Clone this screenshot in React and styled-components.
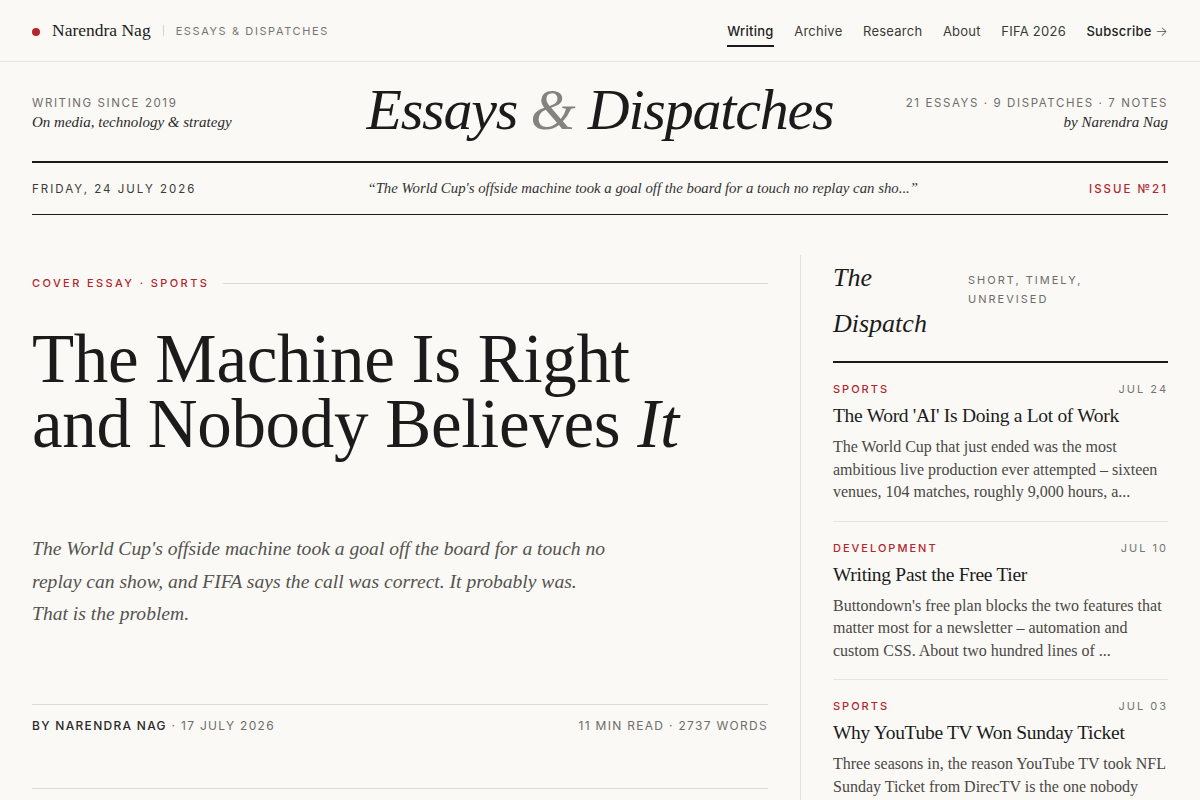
import styled, { createGlobalStyle } from "styled-components";

const GlobalStyle = createGlobalStyle`
  html, body {
    margin: 0;
    padding: 0;
    background: #faf9f6;
  }
  body {
    font-family: Inter, "Noto Sans", sans-serif;
    color: #1b1b1b;
    -webkit-font-smoothing: antialiased;
  }
  * { box-sizing: border-box; }
`;

const serif = `"Liberation Serif", "DejaVu Serif", serif`;
const red = "#b3262d";

const TopBar = styled.header`
  height: 62px;
  padding: 0 32px;
  display: flex;
  align-items: center;
  justify-content: space-between;
  border-bottom: 1px solid #e7e5e0;
`;

const Brand = styled.div`
  display: flex;
  align-items: center;
`;

const Dot = styled.span`
  width: 8px;
  height: 8px;
  border-radius: 50%;
  background: ${red};
  margin: 2px 12px 0 0;
`;

const BrandName = styled.span`
  font-family: ${serif};
  font-size: 17.5px;
  color: #1b1b1b;
`;

const BrandSep = styled.span`
  width: 1px;
  height: 11px;
  background: #d6d4ce;
  margin: 0 12px;
`;

const Kicker = styled.span`
  font-size: 11px;
  letter-spacing: ${(p) => p.$spacing || 1.6}px;
  text-transform: uppercase;
  color: ${(p) => p.$color || "#77756f"};
  font-weight: ${(p) => p.$weight || 400};
`;

const Nav = styled.nav`
  display: flex;
  align-items: center;
  gap: 20.5px;
`;

const NavLink = styled.a`
  font-size: 13px;
  line-height: 16px;
  padding: 8px 0 6px;
  color: ${(p) => (p.$strong ? "#222" : "#3b3a37")};
  font-weight: ${(p) => (p.$strong ? 500 : 400)};
  border-bottom: 2px solid ${(p) => (p.$active ? "#1b1b1b" : "transparent")};
  text-decoration: none;
  letter-spacing: 0.25px;
`;

const Arrow = styled.span`
  font-weight: 300;
  color: #555;
  line-height: 16px;
`;

const Wrap = styled.div`
  padding: 0 32px;
`;

const Masthead = styled.div`
  height: 101px;
  display: grid;
  grid-template-columns: 1fr auto 1fr;
  align-items: center;
  border-bottom: 2px solid #1b1b1b;
`;

const MastSide = styled.div`
  display: flex;
  flex-direction: column;
  gap: 4px;
  align-items: ${(p) => (p.$right ? "flex-end" : "flex-start")};
  padding-top: 3px;
`;

const SmallCaps = styled.span`
  font-size: 11.5px;
  letter-spacing: ${(p) => p.$spacing || 1.6}px;
  text-transform: uppercase;
  color: ${(p) => p.$color || "#6f6d68"};
  font-weight: ${(p) => p.$weight || 400};
`;

const SerifItalic = styled.span`
  font-family: ${serif};
  font-style: italic;
  font-size: ${(p) => p.$size || 15}px;
  color: ${(p) => p.$color || "#2a2a2a"};
`;

const MastTitle = styled.h1`
  margin: 0;
  font-family: ${serif};
  font-style: italic;
  font-weight: 400;
  font-size: 58px;
  letter-spacing: -1.2px;
  line-height: 1;
  color: #1b1b1b;
  padding-bottom: 4px;
  span {
    color: #85837e;
  }
`;

const Dateline = styled.div`
  height: 52px;
  display: flex;
  align-items: center;
  justify-content: space-between;
  border-bottom: 1px solid #1b1b1b;
`;

const Main = styled.main`
  display: grid;
  grid-template-columns: 1fr 367px;
  padding: 40px 32px 0;
`;

const Cover = styled.article`
  padding: 20px 32px 0 0;
  border-right: 1px solid #e2e0da;
`;

const KickerRow = styled.div`
  display: flex;
  align-items: center;
  gap: 14px;
  height: 16px;
  &::after {
    content: "";
    flex: 1;
    height: 1px;
    background: #dcdad4;
  }
`;

const Headline = styled.h2`
  margin: 36px 0 0;
  font-family: ${serif};
  font-weight: 400;
  font-size: 69px;
  line-height: 65px;
  letter-spacing: -0.3px;
  color: #1b1b1b;
  em {
    font-style: italic;
  }
`;

const Deck = styled.p`
  margin: 76px 0 0;
  font-family: ${serif};
  font-style: italic;
  font-size: 19.6px;
  line-height: 32.5px;
  color: #55534f;
`;

const Byline = styled.div`
  margin-top: 73px;
  padding-top: 13px;
  border-top: 1px solid #dedcd6;
  display: flex;
  justify-content: space-between;
  height: 85px;
  border-bottom: 1px solid #dedcd6;
`;

const Meta = styled.span`
  font-size: 12px;
  letter-spacing: 1.3px;
  text-transform: uppercase;
  color: #6f6d68;
  b {
    font-weight: 500;
    color: #2a2a2a;
  }
`;

const Side = styled.aside`
  padding-left: 32px;
`;

const SideHead = styled.div`
  display: flex;
  align-items: flex-start;
  gap: 30px;
  padding-bottom: 14px;
  border-bottom: 2px solid #1b1b1b;
`;

const SideTitle = styled.h3`
  margin: 0;
  flex: 0 0 105px;
  font-family: ${serif};
  font-style: italic;
  font-weight: 400;
  font-size: 26px;
  line-height: 46px;
  color: #1b1b1b;
`;

const Tagline = styled.div`
  padding-top: 16px;
  max-width: 130px;
  font-size: 11px;
  line-height: 19px;
  letter-spacing: 2px;
  text-transform: uppercase;
  color: #6f6d68;
`;

const Item = styled.div`
  padding: 19px 0 17px;
  border-bottom: 1px solid #e6e4de;
  &:first-of-type {
    padding-top: 22px;
  }
`;

const ItemTop = styled.div`
  display: flex;
  justify-content: space-between;
  align-items: center;
  height: 14px;
  font-size: 11px;
  letter-spacing: 2px;
  text-transform: uppercase;
`;

const Cat = styled.span`
  color: ${red};
  font-weight: 500;
`;

const When = styled.span`
  color: #77756f;
`;

const ItemTitle = styled.h4`
  margin: 7px 0 0;
  font-family: ${serif};
  font-weight: 400;
  font-size: 19.5px;
  line-height: 26px;
  letter-spacing: -0.3px;
  color: #1b1b1b;
`;

const Excerpt = styled.p`
  margin: 7px 0 0;
  font-family: ${serif};
  font-size: 16px;
  line-height: 22.5px;
  color: #4a4845;
`;

const dispatches = [
  {
    cat: "Sports",
    date: "Jul 24",
    title: "The Word 'AI' Is Doing a Lot of Work",
    text: "The World Cup that just ended was the most ambitious live production ever attempted – sixteen venues, 104 matches, roughly 9,000 hours, a...",
  },
  {
    cat: "Development",
    date: "Jul 10",
    title: "Writing Past the Free Tier",
    text: "Buttondown's free plan blocks the two features that matter most for a newsletter – automation and custom CSS. About two hundred lines of ...",
  },
  {
    cat: "Sports",
    date: "Jul 03",
    title: "Why YouTube TV Won Sunday Ticket",
    text: "Three seasons in, the reason YouTube TV took NFL Sunday Ticket from DirecTV is the one nobody talks about: the picture was never the product...",
  },
];

const navItems = ["Writing", "Archive", "Research", "About", "FIFA 2026"];

export default function App() {
  return (
    <>
      <GlobalStyle />
      <TopBar>
        <Brand>
          <Dot />
          <BrandName>Narendra Nag</BrandName>
          <BrandSep />
          <Kicker>Essays &amp; Dispatches</Kicker>
        </Brand>
        <Nav>
          {navItems.map((n, i) => (
            <NavLink key={n} $active={i === 0} $strong={i === 0}>
              {n}
            </NavLink>
          ))}
          <NavLink $strong>
            Subscribe <Arrow>→</Arrow>
          </NavLink>
        </Nav>
      </TopBar>

      <Wrap>
        <Masthead>
          <MastSide>
            <SmallCaps>Writing since 2019</SmallCaps>
            <SerifItalic>On media, technology &amp; strategy</SerifItalic>
          </MastSide>
          <MastTitle>
            Essays <span>&amp;</span> Dispatches
          </MastTitle>
          <MastSide $right>
            <SmallCaps>21 essays · 9 dispatches · 7 notes</SmallCaps>
            <SerifItalic>by Narendra Nag</SerifItalic>
          </MastSide>
        </Masthead>
        <Dateline>
          <SmallCaps $color="#3b3a37" $spacing={2}>Friday, 24 July 2026</SmallCaps>
          <SerifItalic $size={14.8} $color="#333">
            “The World Cup's offside machine took a goal off the board for a touch no replay can sho...”
          </SerifItalic>
          <SmallCaps $color={red} $weight={500} $spacing={2}>Issue №21</SmallCaps>
        </Dateline>
      </Wrap>

      <Main>
        <Cover>
          <KickerRow>
            <Kicker $color={red} $weight={500} $spacing={2.4}>
              Cover Essay · Sports
            </Kicker>
          </KickerRow>
          <Headline>
            The Machine Is Right
            <br />
            and Nobody Believes <em>It</em>
          </Headline>
          <Deck>
            The World Cup's offside machine took a goal off the board for a touch no
            <br />
            replay can show, and FIFA says the call was correct. It probably was.
            <br />
            That is the problem.
          </Deck>
          <Byline>
            <Meta>
              <b>By Narendra Nag</b> · 17 July 2026
            </Meta>
            <Meta>11 min read · 2737 words</Meta>
          </Byline>
        </Cover>

        <Side>
          <SideHead>
            <SideTitle>The Dispatch</SideTitle>
            <Tagline>Short, timely, unrevised</Tagline>
          </SideHead>
          {dispatches.map((d) => (
            <Item key={d.title}>
              <ItemTop>
                <Cat>{d.cat}</Cat>
                <When>{d.date}</When>
              </ItemTop>
              <ItemTitle>{d.title}</ItemTitle>
              <Excerpt>{d.text}</Excerpt>
            </Item>
          ))}
        </Side>
      </Main>
    </>
  );
}
